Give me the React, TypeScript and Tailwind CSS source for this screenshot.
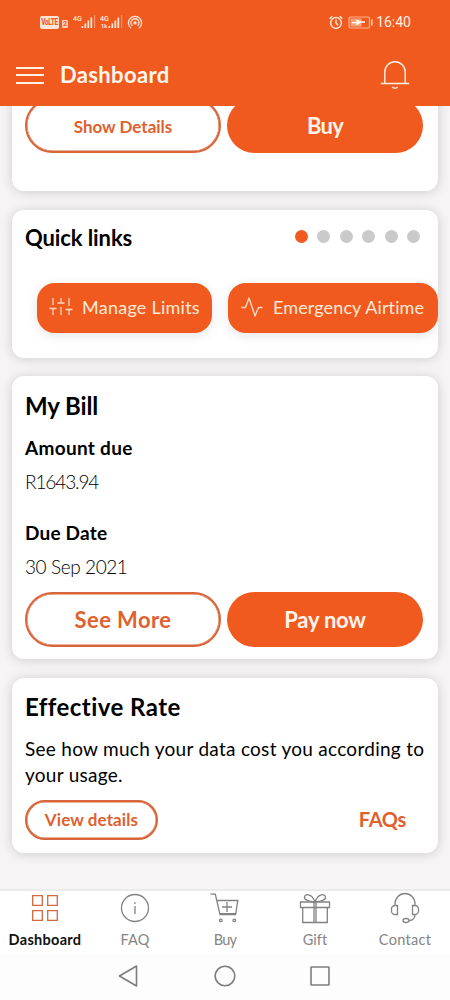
import React from "react";

const Signal: React.FC<{ roaming?: boolean }> = ({ roaming }) => (
  <svg width="23" height="16" viewBox="0 0 23 16" fill="#ffe9dc">
    <text x="0" y="7" fontSize="7" fontWeight="500" fontFamily="Roboto">
      4G
    </text>
    {roaming && (
      <text x="1" y="14.3" fontSize="5.5" fontWeight="700" fontFamily="Roboto">
        1k
      </text>
    )}
    <rect x="8.500" y="12" width="1.700" height="2" />
    <rect x="11.500" y="9.500" width="1.700" height="4.500" />
    <rect x="14.500" y="6.500" width="1.700" height="7.500" />
    <rect x="17.500" y="3.500" width="1.700" height="10.500" />
    <rect x="21" y="1" width="1.200" height="13" opacity="0.4" />
  </svg>
);

const StatusBar: React.FC = () => (
  <div className="flex h-11 items-center pl-10 pr-[39px] text-white">
    <div className="flex h-[13px] w-[19px] items-center justify-center rounded-[2px] bg-[#fde6d8] font-[Roboto] text-[#f05a1f]">
      <span className="scale-y-130 text-[6.5px] leading-none font-extrabold tracking-[-0.4px]">VoLTE</span>
    </div>
    <div className="mt-1 ml-[3px] flex h-2 w-1.5 items-center justify-center rounded-[1px] bg-[#fbd0b8] font-[Roboto] text-[7px] leading-none font-bold text-[#f05a1f]">
      2
    </div>
    <div className="ml-[5px] flex gap-[4px]">
      <Signal />
      <Signal roaming />
    </div>
    <svg className="ml-1" width="16" height="15" viewBox="0 0 16 15" fill="none" stroke="#fde3d3" strokeWidth="1.3">
      <path d="M4 13.2A6.6 6.6 0 1 1 12 13.2" />
      <path d="M5.4 10.8A4 4 0 1 1 10.6 10.8" />
      <circle cx="8" cy="8" r="1.1" fill="#fde3d3" />
    </svg>
    <svg className="ml-auto" width="14" height="15" viewBox="0 0 14 15" fill="none" stroke="#fde3d3" strokeWidth="1.5">
      <circle cx="7" cy="8" r="5.4" />
      <path d="M7 4.8V8l2 2.2M.8 3.6 3.4 1.2M13.2 3.6 10.6 1.2" />
    </svg>
    <svg className="ml-[5px]" width="26" height="13" viewBox="0 0 26 13">
      <rect x="1" y="1" width="20.5" height="11" rx="1.5" fill="none" stroke="#fbb592" strokeWidth="1.2" />
      <rect x="2.5" y="2.5" width="11" height="8" fill="#f7a27a" />
      <path d="M4 6h4.500V3.800l4.500 1.500h4v1.400h-4L8.500 9.200V7.200H4z" fill="#fff" />
      <rect x="23" y="3.500" width="1.6" height="6" fill="#fbd0b8" />
    </svg>
    <span className="ml-0.5 font-[Roboto] text-[14px] leading-none text-[#fff0e4]">16:40</span>
  </div>
);

const Header: React.FC = () => (
  <header className="relative z-10 h-[106px] shrink-0 bg-[#f05a1f]">
    <StatusBar />
    <div className="flex h-[62px] items-center pl-4 pr-10 text-[#fff6ee]">
      <div className="flex w-7 flex-col gap-[5.500px]">
        <div className="h-[2px] bg-[#fff0e4]" />
        <div className="h-[2px] bg-[#fff0e4]" />
        <div className="h-[2px] bg-[#fff0e4]" />
      </div>
      <h1 className="ml-4 text-[22px] leading-none font-bold tracking-[0.35px]">Dashboard</h1>
      <svg className="ml-auto" width="30" height="30" viewBox="0 0 30 30" fill="none" stroke="#fff0e4" strokeWidth="1.4">
        <path d="M.8 23.500h28.4M4.800 23.300V12a10.200 10.200 0 0 1 20.400 0v11.300" />
        <path d="M12.300 26.800c1.400 2 4 2 5.400 0" />
      </svg>
    </div>
  </header>
);

const Card: React.FC<{ className: string; children: React.ReactNode }> = ({
  className,
  children,
}) => (
  <section
    className={`shrink-0 rounded-[12px] bg-white px-[13px] shadow-[0_1px_12px_rgba(40,30,35,0.18)] ${className}`}
  >
    {children}
  </section>
);

const outlineButton =
  "flex items-center justify-center rounded-full border-2 border-[#d8653a] font-bold text-[#df612f] shadow-[inset_0_0_0_0.5px_#d8653a]";
const solidButton =
  "flex items-center justify-center rounded-full bg-[#f05a1f] font-bold text-[#fff4ea]";

const QuickLinks: React.FC = () => (
  <Card className="h-[148px] overflow-hidden">
    <div className="flex items-center justify-between pt-[15px] pr-[5px]">
      <h2 className="text-[22px] leading-[26px] font-bold tracking-[-0.1px]">Quick links</h2>
      <div className="flex gap-[9.5px] pb-1">
        <div className="size-[13px] rounded-full bg-[#f05a1f]" />
        <div className="size-[13px] rounded-full bg-[#cacaca]" />
        <div className="size-[13px] rounded-full bg-[#cacaca]" />
        <div className="size-[13px] rounded-full bg-[#cacaca]" />
        <div className="size-[13px] rounded-full bg-[#cacaca]" />
        <div className="size-[13px] rounded-full bg-[#cacaca]" />
      </div>
    </div>
    <div className="mt-8 -mr-[13px] ml-3 flex gap-4 text-[18px] text-[#ffead8]">
      <button className="flex h-[50px] w-[175px] shrink-0 items-center rounded-[18px] bg-[#f05a1f] pl-3 pb-0.5 shadow-[0_3px_12px_rgba(0,0,0,0.1)]">
        <svg width="24" height="20" viewBox="0 0 24 20" fill="none" stroke="#ffd9bf" strokeWidth="1.3">
          <path d="M4 1v7M.5 11.500h7M4 11.500V18M12 1v5M8.500 6h7M12 10v8M20 1v8M16.500 12.500h7M20 12.500V18" />
        </svg>
        <span className="ml-[9px] whitespace-nowrap tracking-[0.25px]">Manage Limits</span>
      </button>
      <button className="flex h-[50px] w-[210px] shrink-0 items-center rounded-[18px] bg-[#f05a1f] pl-[13px] pb-0.5 shadow-[0_3px_12px_rgba(0,0,0,0.1)]">
        <svg width="22" height="20" viewBox="0 0 22 20" fill="none" stroke="#ffd9bf" strokeWidth="1.4" strokeLinejoin="round">
          <path d="M.5 10.500h4L8 1l6 18 3.500-8.500h4" />
        </svg>
        <span className="ml-[10px] whitespace-nowrap tracking-[0.12px]">Emergency Airtime</span>
      </button>
    </div>
  </Card>
);

const MyBill: React.FC = () => (
  <Card className="h-[283px]">
    <h2 className="pt-4 text-[24px] leading-[28px] font-bold tracking-[-0.1px]">My Bill</h2>
    <h3 className="mt-4 text-[19px] leading-6 font-bold tracking-[0.3px]">Amount due</h3>
    <p className="mt-[10px] text-[19px] leading-6 font-light tracking-[-1.1px]">R1643.94</p>
    <h3 className="mt-[27px] text-[19px] leading-6 font-bold tracking-[0.2px]">Due Date</h3>
    <p className="mt-[10px] text-[19px] leading-6 font-light tracking-[-0.4px]">30 Sep 2021</p>
    <div className="mt-[13px] flex gap-[6px]">
      <button className={`h-[55px] w-[196px] text-[22px] tracking-[0.4px] ${outlineButton}`}>See More</button>
      <button className={`h-[55px] w-[196px] text-[22px] tracking-[-0.2px] ${solidButton}`}>Pay now</button>
    </div>
  </Card>
);

const EffectiveRate: React.FC = () => (
  <Card className="h-[175px]">
    <h2 className="pt-[15px] text-[24px] leading-[28px] font-bold tracking-[0.45px]">Effective Rate</h2>
    <p className="mt-[15px] text-[19px] leading-[26px] tracking-[0.28px] whitespace-nowrap">
      See how much your data cost you according to
      <br />
      your usage.
    </p>
    <div className="mt-3 flex items-center justify-between pr-[19px]">
      <button className={`h-10 w-[133px] text-[17px] tracking-[0.1px] ${outlineButton}`}>View details</button>
      <a className="pb-0.5 text-[20px] leading-none font-bold tracking-[-0.3px] text-[#df612f]">FAQs</a>
    </div>
  </Card>
);

const tabs = [
  {
    label: "Dashboard",
    text: "font-bold tracking-[0.3px] text-[#111]",
    icon: (
      <g stroke="#d2693f">
        <path d="M3.700 3.700h9.600v9.600H3.700zM18.700 3.700h9.600v9.600h-9.600zM3.700 18.700h9.600v9.600H3.700zM18.700 18.700h9.600v9.600h-9.600z" />
      </g>
    ),
  },
  {
    label: "FAQ",
    text: "tracking-[0.1px] text-[#858585]",
    icon: <path d="M16 2.500a13.500 13.500 0 1 1 0 27a13.500 13.500 0 0 1 0-27M16 14v8M16 10.200v1.800" />,
  },
  {
    label: "Buy",
    text: "tracking-[-0.8px] text-[#858585]",
    icon: (
      <>
        <path d="M1.500 2.200h4.800l4.700 20.500h16.200M7.800 8.500h21l-2 13.200H10.500M18 10v10M13 15h10" />
        <circle cx="11.800" cy="28.400" r="1.300" />
        <circle cx="25.300" cy="28.400" r="1.300" />
      </>
    ),
  },
  {
    label: "Gift",
    text: "tracking-[0.1px] text-[#858585]",
    icon: (
      <>
        <path d="M1.500 10h29v5.500h-29zM3.700 15.500h24.600v15H3.700zM15 10v20.500M17 10v20.500" />
        <path d="M16 10C10 9.500 5 8 5.500 5s7-4.500 10.500 5C19.500.500 26 2 26.500 5S22 9.500 16 10z" />
      </>
    ),
  },
  {
    label: "Contact",
    text: "tracking-[0.3px] text-[#858585]",
    icon: (
      <>
        <path d="M6 13v-1.500a10 10 0 0 1 20 0V13M8.500 13.500v9H6a3.500 3.500 0 0 1-3.500-3.500v-2A3.500 3.500 0 0 1 6 13.500zM23.500 13.500v9H26a3.500 3.500 0 0 0 3.500-3.500v-2a3.500 3.500 0 0 0-3.500-3.500zM26 22.500c0 4-2.500 6-6 6" />
        <ellipse cx="17" cy="28.500" rx="3" ry="2" />
      </>
    ),
  },
];

const BottomNav: React.FC = () => (
  <nav className="h-[111px] shrink-0 border-t-2 border-[#ebebeb] bg-[#fdfdfd]">
    <div className="grid h-[62px] grid-cols-5 bg-white">
      {tabs.map((tab) => (
        <div key={tab.label} className="flex flex-col items-center pt-px">
          <svg width="32" height="32" viewBox="0 0 32 32" fill="none" stroke="#828282" strokeWidth="1.300">
            {tab.icon}
          </svg>
          <span className={`mt-2 text-[14.500px] leading-4 ${tab.text}`}>{tab.label}</span>
        </div>
      ))}
    </div>
    <div className="flex h-[45px] items-center justify-center gap-[74px] pr-[3px]">
      <svg width="22" height="24" viewBox="0 0 22 24" fill="none" stroke="#7d7d7d" strokeWidth="1.600" strokeLinejoin="round">
        <path d="M18.500 2v20L1.500 12z" />
      </svg>
      <svg width="22" height="22" viewBox="0 0 22 22" fill="none" stroke="#7d7d7d" strokeWidth="1.600">
        <circle cx="11" cy="11" r="9.800" />
      </svg>
      <svg width="20" height="20" viewBox="0 0 20 20" fill="none" stroke="#7d7d7d" strokeWidth="1.600">
        <rect x="1" y="1" width="18" height="18" rx="0.500" />
      </svg>
    </div>
  </nav>
);

const App: React.FC = () => {
  return (
    <div className="flex h-[1000px] w-[450px] flex-col overflow-hidden bg-[#f6f4f5] font-[Lato,sans-serif] text-black">
      <Header />
      <main className="flex min-h-0 flex-1 flex-col overflow-hidden px-3">
        <Card className="-mt-5 mb-[19px] h-[105px] pt-3">
          <div className="flex gap-[6px]">
            <button className={`h-[55px] w-[196px] pt-0.5 text-[17px] ${outlineButton}`}>
              Show Details
            </button>
            <button className={`h-[55px] w-[196px] text-[22px] tracking-[-0.8px] ${solidButton}`}>Buy</button>
          </div>
        </Card>
        <QuickLinks />
        <div className="h-[18px] shrink-0" />
        <MyBill />
        <div className="h-[19px] shrink-0" />
        <EffectiveRate />
      </main>
      <BottomNav />
    </div>
  );
};

export default App;
